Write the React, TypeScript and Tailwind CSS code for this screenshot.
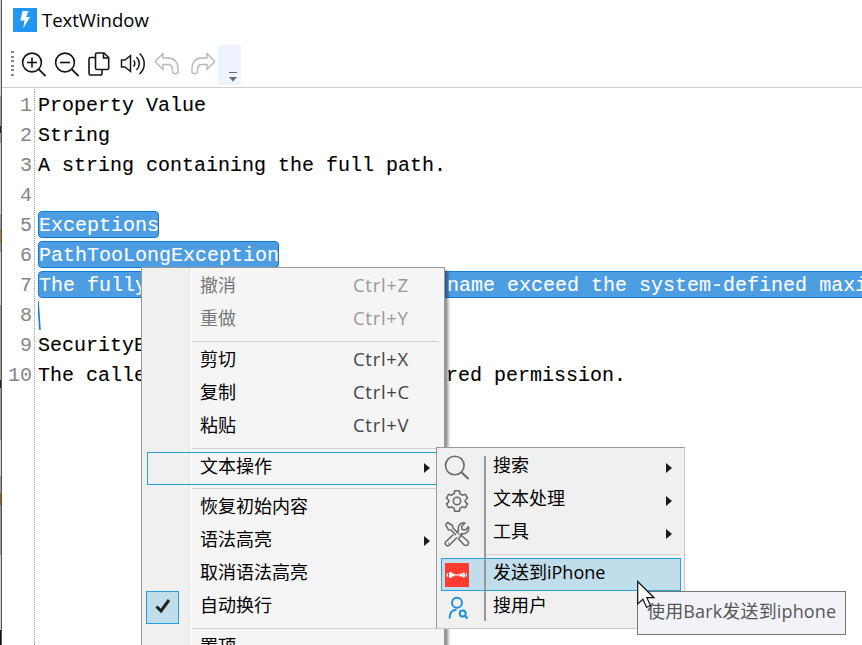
import { ReactNode } from "react";
import { clsx } from "clsx";

type Line = { text: string; selected?: boolean };

const lines: Line[] = [
  { text: "Property Value" },
  { text: "String" },
  { text: "A string containing the full path." },
  { text: "" },
  { text: "Exceptions", selected: true },
  { text: "PathTooLongException", selected: true },
  {
    text: "The fully qualified path and file name exceed the system-defined maximum length.",
    selected: true,
  },
  { text: "" },
  { text: "SecurityException" },
  { text: "The caller does not have the required permission." },
];

const BoltLogo = () => (
  <svg width="24" height="24" viewBox="0 0 24 24">
    <rect width="24" height="24" fill="#2196f3" />
    <path d="M9.5 3h6l-2.3 6H17l-6.8 11.5 1.3-8H7.4z" fill="#fff" />
  </svg>
);

const ZoomIcon = ({ plus }: { plus?: boolean }) => (
  <svg width="26" height="26" viewBox="0 0 26 26" fill="none" stroke="#161616" strokeWidth="1.6">
    <circle cx="11" cy="10.5" r="9.4" />
    <path d="M6 10.5h10" />
    {plus && <path d="M11 5.5v10" />}
    <path d="M17.6 17.2l7 7" strokeWidth="1.9" />
  </svg>
);

const CopyIcon = () => (
  <svg width="22" height="26" viewBox="0 0 22 26" fill="none" stroke="#161616" strokeWidth="1.6">
    <path d="M9 1h7l4.700 4.500V16A1.500 1.500 0 0 1 19.200 17.500H9A1.500 1.500 0 0 1 7.500 16V2.500A1.500 1.500 0 0 1 9 1z" />
    <path d="M15.500 1v5h5M7.500 5.500H2.500A1.500 1.500 0 0 0 1 7v14.500A1.500 1.500 0 0 0 2.500 23H12.500A1.500 1.500 0 0 0 14 21.500v-4" />
  </svg>
);

const SpeakerIcon = () => (
  <svg width="26" height="26" viewBox="0 0 26 26" fill="none" stroke="#161616" strokeWidth="1.5">
    <path d="M1.500 8h3.500l5.500-4.500v16L5 15H1.500z" />
    <path d="M13.500 8.500a4 4 0 0 1 0 6M16.500 5a9 9 0 0 1 0 13M19.500 1.500a13.500 13.500 0 0 1 0 20.500" />
  </svg>
);

const UndoIcon = ({ flip }: { flip?: boolean }) => (
  <svg
    width="26"
    height="26"
    viewBox="0 0 26 26"
    fill="none"
    stroke="#b8b8b8"
    strokeWidth="1.400"
    strokeLinejoin="round"
    className={clsx(flip && "-scale-x-100")}
  >
    <path d="M1.200 9.500L9 1.500V6H14.500C20.500 6 24 10.500 24 16V20.500Q21.500 23 18.500 20.500V17.500C18.500 14.500 17 12.500 14 12.500H9V17.500z" />
  </svg>
);

const SearchIcon = () => (
  <svg width="26" height="26" viewBox="0 0 26 26" fill="none" stroke="#6a6a6a" strokeWidth="1.6">
    <circle cx="10.800" cy="10.500" r="9.300" />
    <path d="M17.500 17.300l7 6.700" strokeWidth="2" />
  </svg>
);

const GearIcon = () => (
  <svg width="24" height="24" viewBox="0 0 26 26" fill="none" stroke="#6a6a6a" strokeWidth="1.700" strokeLinejoin="round">
    <circle cx="13" cy="13" r="4" />
    <path d="M10.500 1.800h5l.6 3.400q2 .5 2.800 1.700l3.200-1.200 2.300 4.300-2.500 2.200v1.700l2.500 2.200-2.300 4.200-3.300-1.100q-1 1.100-2.700 1.600l-.6 3.400h-5l-.6-3.400q-1.700-.5-2.700-1.600l-3.300 1.100-2.300-4.200 2.500-2.200v-1.700l-2.500-2.200 2.300-4.300 3.200 1.200q1-1.200 2.800-1.700z" />
  </svg>
);

const ToolsIcon = () => (
  <svg width="26" height="26" viewBox="0 0 26 26" fill="none" stroke="#666" strokeWidth="1.500" strokeLinejoin="round">
    <path d="M1.500 3.500l2-2L8.500 4.500 9 7l6 6M1.500 3.500L4.300 8.700 7 9l5 5" />
    <path d="M15 17l2.500-2.500 6.200 5.500a2.600 2.600 0 0 1-3.700 3.800L14.500 18z" />
    <path d="M12.500 11.500l2-2c-1.300-4.500 2-8.500 6.500-7.500l-3.500 3.500.7 3 3.200.6 3-3.400c1.200 4.500-2.500 8-6.700 6.900l-2 2M9.500 13.500l-7.500 7a2.400 2.400 0 0 0 3.500 3.500l7.500-7.500" />
    <path d="M4 22.500h.8" />
  </svg>
);

const BarkIcon = () => (
  <svg width="24" height="24" viewBox="0 0 24 24">
    <rect width="24" height="24" fill="#ff3b30" />
    <g fill="#fff">
      <rect x="1.700" y="10.200" width="1.300" height="3.500" rx=".6" />
      <rect x="4" y="9" width="3" height="6" rx="1" />
      <rect x="7" y="10.500" width="2.500" height="3" rx=".6" />
      <rect x="9.500" y="11.300" width="5" height="1.200" />
      <rect x="14.500" y="10.500" width="2.500" height="3" rx=".6" />
      <rect x="17.300" y="9.500" width="2.700" height="5" rx="1" />
      <rect x="20.700" y="10.200" width="1.200" height="3.500" rx=".6" />
    </g>
  </svg>
);

const UserSearchIcon = () => (
  <svg width="24" height="24" viewBox="0 0 24 24" fill="none" stroke="#1a8fd8" strokeWidth="1.900">
    <circle cx="12" cy="6.700" r="5" />
    <path d="M4.500 22.500c0-5 2.500-8.500 7-9" />
    <circle cx="17.700" cy="17.500" r="3" />
    <path d="M19.700 19.500l3 3" />
  </svg>
);

const Arrow = () => (
  <svg width="6" height="10" viewBox="0 0 6 10">
    <path d="M0 0l6 5-6 5z" fill="#1b1b1b" />
  </svg>
);

const Toolbar = () => (
  <div className="flex h-[48px] items-start border-b border-[#cfcfcf] pl-[9px]">
    <div className="mt-[11px] flex h-[25px] w-[3px] flex-col justify-between">
      {[0, 1, 2, 3, 4, 5].map((i) => (
        <span key={i} className="h-[2px] w-[3px] bg-[#858585]" />
      ))}
    </div>
    <div className="mt-[12px] ml-[7px] flex">
      <ZoomIcon plus />
      <div className="ml-[7px]">
        <ZoomIcon />
      </div>
      <div className="ml-[8px]">
        <CopyIcon />
      </div>
      <div className="ml-[10px]">
        <SpeakerIcon />
      </div>
      <div className="ml-[8px]">
        <UndoIcon />
      </div>
      <div className="ml-[10px]">
        <UndoIcon flip />
      </div>
    </div>
    <div className="mt-[5px] ml-[2px] flex h-[40px] w-[23px] flex-col items-center rounded-r-[3px] bg-[#eef4fd] pt-[27px] pl-[6px]">
      <span className="h-px w-[8px] bg-[#666]" />
      <svg width="8" height="5" viewBox="0 0 8 5" className="mt-[4px]">
        <path d="M0 0h8L4 4.500z" fill="#666" />
      </svg>
    </div>
  </div>
);

const Editor = () => (
  <div className="flex flex-1 pt-[3px] font-['Liberation_Mono','Noto_Sans_CJK_SC',monospace] text-[20px] leading-[30px]">
    <div className="w-[33px] shrink-0 border-r border-dotted border-[#999] pr-[2px] text-right text-[#858585]">
      {lines.map((_, i) => (
        <div key={i} className="h-[30px]">
          {i + 1}
        </div>
      ))}
    </div>
    <div className="min-w-0 flex-1 overflow-hidden pl-[3px] whitespace-pre text-black [-webkit-text-stroke:0.1px]">
      {lines.map((line, i) => (
        <div key={i} className="flex h-[30px] items-start">
          {line.selected ? (
            <span className="h-[27px] shrink-0 rounded-[4px] border border-[#0f7bd7] bg-[#4d9de3] text-white">
              <span className="-mr-px block leading-[28px]">{line.text}</span>
            </span>
          ) : (
            <span className="leading-[30px]">{line.text}</span>
          )}
          {i === 7 && (
            <svg width="4" height="29" viewBox="0 0 4 29" className="">
              <path d="M0 0v13L1.200 29h1.600L.8 0z" fill="#0f7bd7" />
            </svg>
          )}
        </div>
      ))}
    </div>
  </div>
);

const MenuItem = ({
  label,
  shortcut,
  disabled,
  submenu,
  active,
  checked,
}: {
  label: string;
  shortcut?: string;
  disabled?: boolean;
  submenu?: boolean;
  active?: boolean;
  checked?: boolean;
}) => (
  <div
    className={clsx(
      "ml-[5px] flex h-[33px] shrink-0 items-center",
      active && "border border-[#26a0da]"
    )}
  >
    <div className={clsx("flex shrink-0 items-center", active ? "w-[52px]" : "w-[53px]")}>
      {checked && (
        <div className="-ml-px flex h-[33px] w-[33px] items-center justify-center border border-[#26a0da] bg-[#c0ddeb]">
          <svg width="16" height="14" viewBox="0 0 16 14" fill="none" stroke="#212121" strokeWidth="3" className="-mt-[4px]">
            <path d="M1.500 7.500l4.500 4.500L14 1" />
          </svg>
        </div>
      )}
    </div>
    <span className={clsx("-mt-[5px]", disabled ? "text-[#777]" : "text-black")}>{label}</span>
    {shortcut && (
      <span
        className={clsx(
          "-mt-[5px] mr-[34px] ml-auto w-[57px] text-[18.500px] tracking-[0.700px]",
          disabled ? "text-[#999]" : "text-[#444]"
        )}
      >
        {shortcut}
      </span>
    )}
    {submenu && (
      <span className={clsx("-mt-px ml-auto", active ? "mr-[13px]" : "mr-[14px]")}>
        <Arrow />
      </span>
    )}
  </div>
);

const Separator = ({ tight }: { tight?: boolean }) => (
  <div className={clsx("flex shrink-0 items-center pr-[5px] pl-[50px]", tight ? "h-[7px]" : "h-[8px]")}>
    <span className="h-px w-full bg-[#d0d0d0]" />
  </div>
);

const ContextMenu = () => (
  <div className="absolute top-[267px] left-[141px] flex h-[400px] w-[304px] flex-col border border-[#999] bg-[linear-gradient(to_right,#f0f0f0_47px,#e2e2e2_47px,#e2e2e2_48px,#fff_48px,#fff_49px,#f5f5f5_49px)] pt-[3px] font-[390] shadow-[3px_4px_3px_rgba(0,0,0,0.450)]">
    <MenuItem label="撤消" shortcut="Ctrl+Z" disabled />
    <MenuItem label="重做" shortcut="Ctrl+Y" disabled />
    <Separator />
    <MenuItem label="剪切" shortcut="Ctrl+X" />
    <MenuItem label="复制" shortcut="Ctrl+C" />
    <MenuItem label="粘贴" shortcut="Ctrl+V" />
    <Separator />
    <MenuItem label="文本操作" submenu active />
    <Separator tight />
    <MenuItem label="恢复初始内容" />
    <MenuItem label="语法高亮" submenu />
    <MenuItem label="取消语法高亮" />
    <MenuItem label="自动换行" checked />
    <Separator />
    <MenuItem label="置顶" />
  </div>
);

const SubItem = ({
  icon,
  label,
  submenu,
  active,
  bar = "h-[33px]",
}: {
  icon: ReactNode;
  label: string;
  submenu?: boolean;
  active?: boolean;
  bar?: string;
}) => (
  <div
    className={clsx(
      "mr-[3px] ml-[4px] flex h-[33px] shrink-0 items-center border",
      active ? "border-[#26a0da] bg-[#c0ddeb]" : "border-transparent"
    )}
  >
    <div className="flex w-[30px] shrink-0 items-center justify-center">{icon}</div>
    <div className={clsx("ml-[12px] w-[2px] shrink-0 bg-[#999]", bar)} />
    <span className="-mt-[5px] ml-[7px] text-black">{label}</span>
    {submenu && (
      <span className="mr-[8px] ml-auto">
        <Arrow />
      </span>
    )}
  </div>
);

const SubMenu = () => (
  <div className="absolute top-[447px] left-[436px] flex h-[182px] w-[249px] flex-col border border-[#c8c8c8] border-t-[#999] border-l-[#999] bg-[#f0f0f0] pt-[3px] font-[390]">
    <SubItem icon={<SearchIcon />} label="搜索" submenu bar="h-[28px] -mb-px self-end" />
    <SubItem icon={<GearIcon />} label="文本处理" submenu />
    <SubItem icon={<ToolsIcon />} label="工具" submenu />
    <div className="ml-[47px] flex h-[8px] shrink-0 items-center border-l-2 border-[#999] pr-[4px]">
      <span className="h-px w-full bg-[#d4d4d4]" />
    </div>
    <SubItem icon={<BarkIcon />} label="发送到iPhone" active />
    <SubItem icon={<UserSearchIcon />} label="搜用户" bar="-mt-px h-[30px] self-start" />
  </div>
);

const Cursor = () => (
  <svg width="20" height="30" viewBox="0 0 20 30" className="absolute top-[580px] left-[637px]">
    <path d="M.7 1.500v22.500l5.200-4.800 3.700 8 3.900-1.700-3.700-7.800h7.200z" fill="#fff" stroke="#111" strokeWidth="1.200" />
  </svg>
);

const App = () => {
  return (
    <div className="relative flex h-[645px] w-[862px] overflow-hidden bg-white font-['Open_Sans','Noto_Sans_CJK_SC',sans-serif] text-[18px] leading-[26px]">
      {/* sliver of the window behind */}
      <div className="w-[2px] shrink-0 border-r border-[#555] bg-[linear-gradient(to_bottom,#d0d0d0_96px,#999_96px,#999_126px,#222_126px,#222_133px,#999_133px,#999_143px,#d0d0d0_143px,#d0d0d0_214px,#999_214px,#999_230px,#a08040_230px,#a08040_243px,#999_243px,#999_252px,#d0d0d0_252px,#d0d0d0_305px,#999_305px,#999_380px,#223_380px,#223_388px,#999_388px,#999_440px,#d0d0d0_440px,#d0d0d0_476px,#999_476px,#999_493px,#906020_493px,#906020_505px,#999_505px,#999_555px,#d0d0d0_555px,#d0d0d0_630px,#111_630px)]" />
      <div className="flex min-w-0 flex-1 flex-col">
        <div className="flex h-[40px] shrink-0 items-center pl-[11px]">
          <BoltLogo />
          <span className="ml-[5px] text-[18.500px] text-black">TextWindow</span>
        </div>
        <Toolbar />
        <Editor />
      </div>
      <ContextMenu />
      <SubMenu />
      <div className="absolute top-[591px] left-[637px] flex h-[44px] w-[209px] items-center border border-[#767676] bg-[#f1f3f8] pl-[9px] font-[390] tracking-[0.150px] whitespace-nowrap text-[#575757]">
        <span className="-mt-[4px]">使用Bark发送到iphone</span>
      </div>
      <Cursor />
    </div>
  );
};

export default App;
